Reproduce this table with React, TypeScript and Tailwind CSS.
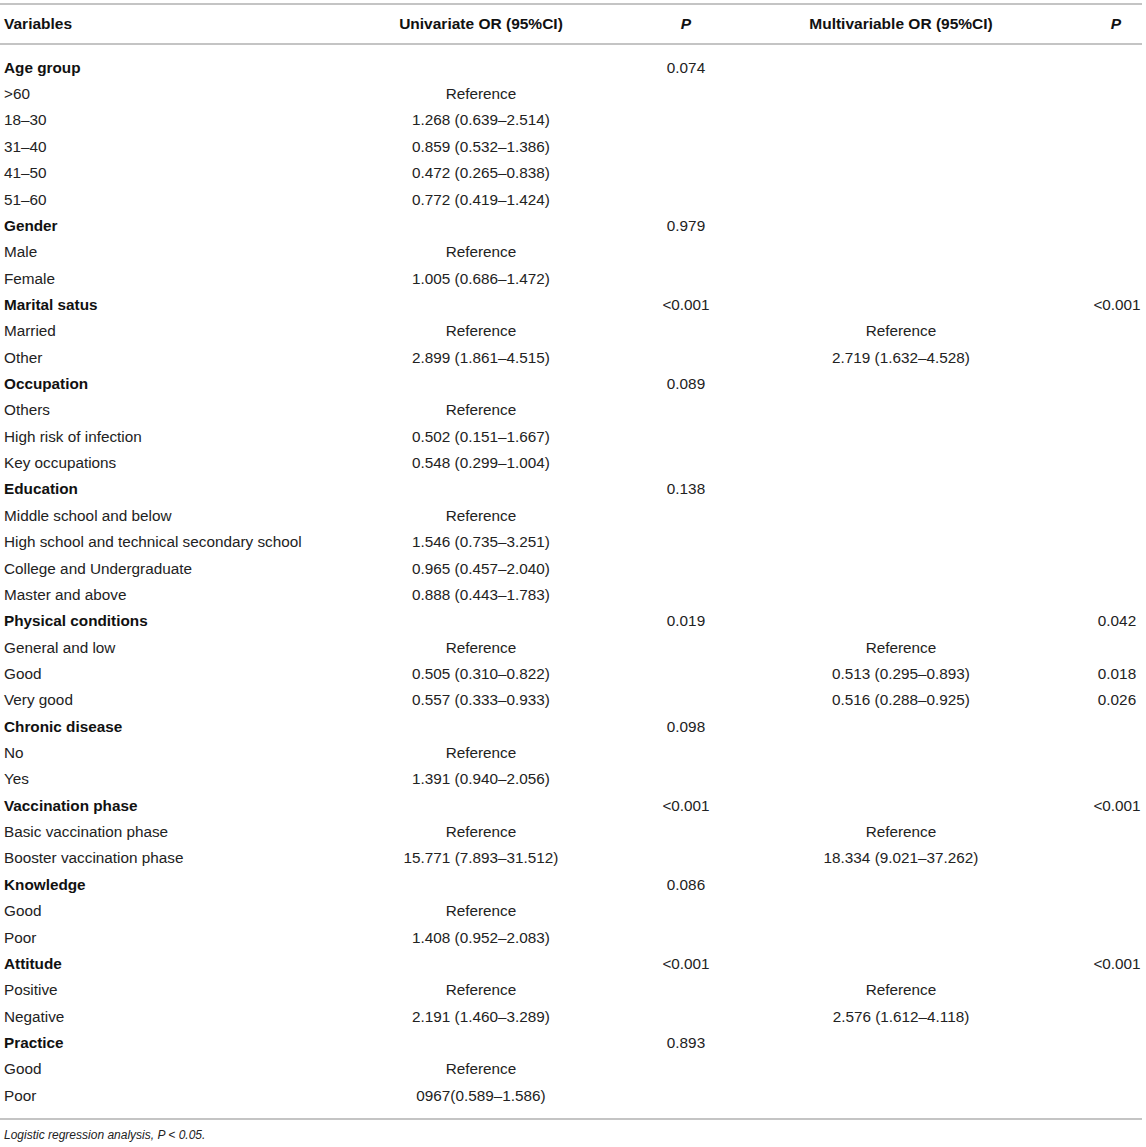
const rows: { label: string; bold?: boolean; uni?: string; p1?: string; multi?: string; p2?: string }[] = [
  { label: "Age group", bold: true, p1: "0.074" },
  { label: ">60", uni: "Reference" },
  { label: "18–30", uni: "1.268 (0.639–2.514)" },
  { label: "31–40", uni: "0.859 (0.532–1.386)" },
  { label: "41–50", uni: "0.472 (0.265–0.838)" },
  { label: "51–60", uni: "0.772 (0.419–1.424)" },
  { label: "Gender", bold: true, p1: "0.979" },
  { label: "Male", uni: "Reference" },
  { label: "Female", uni: "1.005 (0.686–1.472)" },
  { label: "Marital satus", bold: true, p1: "<0.001", p2: "<0.001" },
  { label: "Married", uni: "Reference", multi: "Reference" },
  { label: "Other", uni: "2.899 (1.861–4.515)", multi: "2.719 (1.632–4.528)" },
  { label: "Occupation", bold: true, p1: "0.089" },
  { label: "Others", uni: "Reference" },
  { label: "High risk of infection", uni: "0.502 (0.151–1.667)" },
  { label: "Key occupations", uni: "0.548 (0.299–1.004)" },
  { label: "Education", bold: true, p1: "0.138" },
  { label: "Middle school and below", uni: "Reference" },
  { label: "High school and technical secondary school", uni: "1.546 (0.735–3.251)" },
  { label: "College and Undergraduate", uni: "0.965 (0.457–2.040)" },
  { label: "Master and above", uni: "0.888 (0.443–1.783)" },
  { label: "Physical conditions", bold: true, p1: "0.019", p2: "0.042" },
  { label: "General and low", uni: "Reference", multi: "Reference" },
  { label: "Good", uni: "0.505 (0.310–0.822)", multi: "0.513 (0.295–0.893)", p2: "0.018" },
  { label: "Very good", uni: "0.557 (0.333–0.933)", multi: "0.516 (0.288–0.925)", p2: "0.026" },
  { label: "Chronic disease", bold: true, p1: "0.098" },
  { label: "No", uni: "Reference" },
  { label: "Yes", uni: "1.391 (0.940–2.056)" },
  { label: "Vaccination phase", bold: true, p1: "<0.001", p2: "<0.001" },
  { label: "Basic vaccination phase", uni: "Reference", multi: "Reference" },
  { label: "Booster vaccination phase", uni: "15.771 (7.893–31.512)", multi: "18.334 (9.021–37.262)" },
  { label: "Knowledge", bold: true, p1: "0.086" },
  { label: "Good", uni: "Reference" },
  { label: "Poor", uni: "1.408 (0.952–2.083)" },
  { label: "Attitude", bold: true, p1: "<0.001", p2: "<0.001" },
  { label: "Positive", uni: "Reference", multi: "Reference" },
  { label: "Negative", uni: "2.191 (1.460–3.289)", multi: "2.576 (1.612–4.118)" },
  { label: "Practice", bold: true, p1: "0.893" },
  { label: "Good", uni: "Reference" },
  { label: "Poor", uni: "0967(0.589–1.586)" },
]

const cols = "grid grid-cols-[302px_358px_52px_378px_52px]"

export default function App() {
  return (
    <div className="w-[1146px] min-h-[1147px] bg-white pt-[3px] text-[#222] font-['Liberation_Sans',Arial,sans-serif]">
      <div className="w-[1142px]">
        {/* Header */}
        <div className={`${cols} h-[42px] items-center border-y-2 border-[#c4c4c4] text-[15.5px] font-bold text-[#111] whitespace-nowrap`}>
          <div className="pl-[4px]">Variables</div>
          <div className="text-center">Univariate OR (95%CI)</div>
          <div className="text-center italic">P</div>
          <div className="text-center">Multivariable OR (95%CI)</div>
          <div className="text-center italic">P</div>
        </div>

        {/* Body */}
        <div className="pt-[10px] pb-[9px] border-b-2 border-[#c4c4c4] text-[15.3px] whitespace-nowrap">
          {rows.map((r, i) => (
            <div key={i} className={`${cols} h-[26.36px] items-center`}>
              <div className={`pl-[4px] ${r.bold ? "font-bold text-[#111]" : ""}`}>{r.label}</div>
              <div className="text-center">{r.uni}</div>
              <div className="text-center">{r.p1}</div>
              <div className="text-center">{r.multi}</div>
              <div className="text-center pl-[2px]">{r.p2}</div>
            </div>
          ))}
        </div>

        <div className="pt-[6px] pl-[4px] text-[12px] italic leading-[18px]">
          Logistic regression analysis, P &lt; 0.05.
        </div>
      </div>
    </div>
  )
}
